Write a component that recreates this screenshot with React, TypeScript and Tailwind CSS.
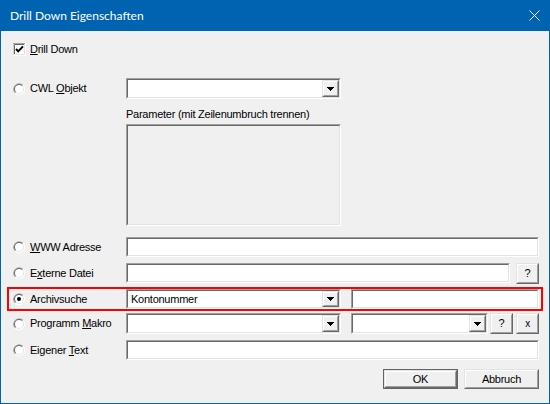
import React from 'react';

function Sunken({ className = '', bg = 'bg-white', children }: { className?: string; bg?: string; children?: React.ReactNode }) {
  return (
    <div className={`border border-t-[#a0a0a0] border-l-[#a0a0a0] border-r-white border-b-white ${className}`}>
      <div className={`h-full w-full border border-t-[#696969] border-l-[#696969] border-r-[#e3e3e3] border-b-[#e3e3e3] ${bg} flex items-center overflow-hidden`}>
        {children}
      </div>
    </div>
  );
}

function Raised({ className = '', children }: { className?: string; children?: React.ReactNode }) {
  return (
    <div className={`border border-t-[#e3e3e3] border-l-[#e3e3e3] border-r-[#696969] border-b-[#696969] ${className}`}>
      <div className="h-full w-full border border-t-white border-l-white border-r-[#a0a0a0] border-b-[#a0a0a0] bg-[#f0f0f0] flex items-center justify-center">
        {children}
      </div>
    </div>
  );
}

function Arrow() {
  return (
    <svg width="7" height="4" viewBox="0 0 7 4" shapeRendering="crispEdges">
      <polygon points="0,0 7,0 3.5,4" fill="#000" />
    </svg>
  );
}

function Combo({ className = '', text }: { className?: string; text?: string }) {
  return (
    <Sunken className={className}>
      <div className="flex-1 pl-[3px] leading-none">{text}</div>
      <Raised className="w-[17px] h-full">
        <Arrow />
      </Raised>
    </Sunken>
  );
}

function Radio({ checked = false }: { checked?: boolean }) {
  return (
    <svg width="12" height="12" viewBox="0 0 12 12" className="shrink-0">
      <circle cx="6" cy="6" r="6" fill="#ffffff" />
      <path d="M1.76 10.24 A6 6 0 0 1 10.24 1.76 Z" fill="#a0a0a0" />
      <circle cx="6" cy="6" r="5" fill="#e3e3e3" />
      <path d="M2.46 9.54 A5 5 0 0 1 9.54 2.46 Z" fill="#696969" />
      <circle cx="6" cy="6" r="4" fill="#ffffff" />
      {checked && <circle cx="6" cy="6" r="2" fill="#000000" />}
    </svg>
  );
}

function Check() {
  return (
    <svg width="13" height="13" viewBox="0 0 13 13" className="shrink-0">
      <rect x="0" y="0" width="13" height="13" fill="#ffffff" />
      <path d="M0 12.5 V0.5 H12.5" stroke="#a0a0a0" fill="none" />
      <path d="M0.5 13 V12.5 H12.5 V0" stroke="#ffffff" fill="none" />
      <path d="M1.5 11 V1.5 H11.5" stroke="#696969" fill="none" />
      <path d="M1.5 11.5 H11.5 V1" stroke="#e3e3e3" fill="none" />
      <polyline points="3,6 5.2,8.4 10,3.4" stroke="#000" strokeWidth="2" fill="none" />
    </svg>
  );
}

function Label({ children, checked, w = 'w-[125px] pl-[12px]' }: { children: React.ReactNode; checked?: boolean; w?: string }) {
  return (
    <div className={`${w} h-full flex items-center gap-[5px] shrink-0`}>
      <Radio checked={checked} />
      <span className="leading-none">{children}</span>
    </div>
  );
}

export default function App() {
  return (
    <div className="w-[550px] h-[404px] flex flex-col bg-[#f0f0f0] text-[11px] tracking-[-0.25px] text-black font-['Liberation_Sans',Arial,sans-serif] select-none">
      <div className="h-[31px] bg-[#0063b1] flex items-center justify-between pl-[10px] pr-[10px] shrink-0">
        <span className="text-white text-[12px] tracking-normal font-['Lato','Noto_Sans',sans-serif] leading-none">Drill Down Eigenschaften</span>
        <svg width="11" height="11" viewBox="0 0 11 11">
          <path d="M0.5 0.5 L10.5 10.5 M10.5 0.5 L0.5 10.5" stroke="#ffffff" strokeWidth="1" />
        </svg>
      </div>
      <div className="flex-1 flex flex-col border-l border-r border-b border-[#0063b1]">
        <div className="mt-[12px] h-[13px] flex items-center pl-[12px] gap-[4px]">
          <Check />
          <span className="leading-none"><span className="underline">D</span>rill Down</span>
        </div>

        <div className="mt-[22px] h-[21px] flex items-center">
          <Label>CWL <span className="underline">O</span>bjekt</Label>
          <Combo className="w-[215px] h-[21px]" />
        </div>

        <div className="mt-[9px] h-[13px] flex items-center pl-[125px]">
          <span className="leading-none">Parameter (mit Zeilenumbruch trennen)</span>
        </div>
        <div className="mt-[3px] flex pl-[125px]">
          <Sunken className="w-[215px] h-[102px]" bg="bg-[#f0f0f0]" />
        </div>

        <div className="mt-[11px] h-[20px] flex items-center">
          <Label><span className="underline">W</span>WW Adresse</Label>
          <Sunken className="w-[413px] h-[20px]" />
        </div>

        <div className="mt-[6px] h-[20px] flex items-center">
          <Label>E<span className="underline">x</span>terne Datei</Label>
          <Sunken className="w-[384px] h-[20px]" />
          <Raised className="ml-[6px] w-[23px] h-[21px]">
            <span className="leading-none">?</span>
          </Raised>
        </div>

        <div className="mt-[4px] ml-[6px] w-[536px] h-[24px] border-2 border-[#ff0000] flex items-center">
          <Label checked w="w-[117px] pl-[4px]">Archivsuche</Label>
          <Combo className="w-[215px] h-[20px]" text="Kontonummer" />
          <Sunken className="ml-[10px] w-[188px] h-[20px]" />
        </div>

        <div className="mt-[2px] h-[21px] flex items-center">
          <Label>Programm <span className="underline">M</span>akro</Label>
          <Combo className="w-[215px] h-[21px]" />
          <Combo className="ml-[10px] w-[137px] h-[21px]" />
          <Raised className="ml-[2px] w-[23px] h-[21px]">
            <span className="leading-none">?</span>
          </Raised>
          <Raised className="ml-[3px] w-[23px] h-[21px]">
            <span className="leading-none text-[10px]">x</span>
          </Raised>
        </div>

        <div className="mt-[6px] h-[20px] flex items-center">
          <Label>Eigener <span className="underline">T</span>ext</Label>
          <Sunken className="w-[413px] h-[20px]" />
        </div>

        <div className="mt-[9px] h-[20px] flex justify-end pr-[10px] gap-[6px]">
          <div className="w-[75px] h-[20px] border border-[#646464]">
            <Raised className="w-full h-full">
              <span className="leading-none">OK</span>
            </Raised>
          </div>
          <Raised className="w-[75px] h-[20px]">
            <span className="leading-none">Abbruch</span>
          </Raised>
        </div>
      </div>
    </div>
  );
}
